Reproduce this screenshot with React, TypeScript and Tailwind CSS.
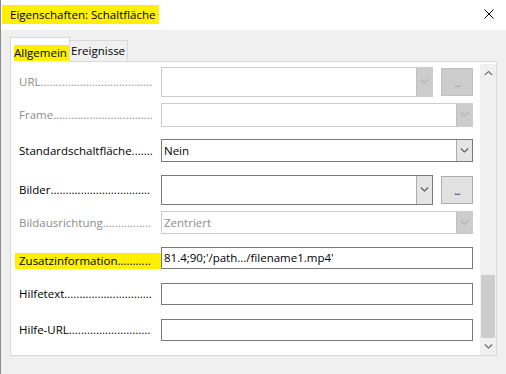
import { ReactNode } from 'react'

const font = { fontFamily: '"Open Sans", "Noto Sans", sans-serif' }

// fill a label with dots up to the given width, like the original dialog
let ctx: CanvasRenderingContext2D | null = null
function dotted(text: string, width = 134) {
  if (!ctx) ctx = document.createElement('canvas').getContext('2d')
  if (!ctx) return text + '.'.repeat(20)
  ctx.font = '11.5px "Open Sans", "Noto Sans", sans-serif'
  let s = text
  while (ctx.measureText(s + '.').width <= width) s += '.'
  return s
}

function Chevron({ up = false, color = '#606060', size = 9 }: { up?: boolean; color?: string; size?: number }) {
  return (
    <svg width={size} height={size / 2 + 1} viewBox="0 0 10 6" fill="none">
      <path
        d={up ? 'M1 5.5 L5 1.5 L9 5.5' : 'M1 0.5 L5 4.5 L9 0.5'}
        stroke={color}
        strokeWidth={1.2}
      />
    </svg>
  )
}

function Label({ text, disabled }: { text: string; disabled?: boolean }) {
  return (
    <div
      className={`w-[142px] shrink-0 whitespace-nowrap text-[11.5px] ${
        disabled ? 'text-[#8d8d8d]' : 'text-black'
      }`}
    >
      {dotted(text)}
    </div>
  )
}

function Field({
  value,
  disabled,
  dropdown,
  children,
}: {
  value?: string
  disabled?: boolean
  dropdown?: boolean
  children?: ReactNode
}) {
  return (
    <div
      className={`flex h-full flex-1 items-stretch border bg-white ${
        disabled ? 'border-[#cccccc]' : 'border-[#7a7a7a]'
      }`}
    >
      <div
        className={`flex flex-1 items-center pl-[2px] text-[11.5px] ${
          disabled ? 'text-[#8d8d8d]' : 'text-black'
        }`}
      >
        {value}
      </div>
      {dropdown && (
        <div
          className={`flex w-[16px] items-center justify-center border-l ${
            disabled ? 'border-[#bfbfbf] bg-[#cccccc]' : 'border-[#adadad] bg-[#e5e5e5]'
          }`}
        >
          <Chevron color={disabled ? '#b0b0b0' : '#505050'} />
        </div>
      )}
      {children}
    </div>
  )
}

function DotsButton({ disabled }: { disabled?: boolean }) {
  return (
    <div
      className={`ml-[8px] flex h-[28px] w-[32px] shrink-0 items-center justify-center border pt-[3px] text-[11px] tracking-[-1px] ${
        disabled
          ? 'border-[#bfbfbf] bg-[#cccccc] text-[#9a9a9a]'
          : 'border-[#adadad] bg-[#e1e1e1] text-[#202060]'
      }`}
    >
      ...
    </div>
  )
}

export default function App() {
  return (
    <div
      className="flex h-[374px] w-[506px] flex-col overflow-hidden border-l border-[#8a8a8a] bg-[#f0f0f0]"
      style={font}
    >
      {/* Title bar */}
      <div className="flex h-[30px] shrink-0 items-start justify-between bg-white">
        <div className="ml-px mt-[5px] h-[19px] bg-[#fff000] pl-[8px] pr-[4px] text-[11.5px] leading-[19px] text-black">
          Eigenschaften: Schaltfläche
        </div>
        <svg className="mr-[12px] mt-[9px]" width="10" height="10" viewBox="0 0 10 10">
          <path d="M0.5 0.5 L9.5 9.5 M9.5 0.5 L0.5 9.5" stroke="#000" strokeWidth={1} />
        </svg>
      </div>

      {/* Tabs */}
      <div className="ml-[9px] mt-[7px] flex h-[24px] items-end">
        <div className="relative z-10 -mb-px flex h-[25px] w-[60px] items-end border border-b-0 border-[#d9d9d9] bg-white">
          <div className="mb-px ml-[3px] h-[16px] w-[57px] bg-[#fff000] text-[11.5px] leading-[16px] text-black">
            Allgemein
          </div>
        </div>
        <div className="flex h-[21px] w-[58px] items-center border border-l-0 border-b-0 border-[#d9d9d9] bg-[#f0f0f0] pl-[1px] text-[11.5px] text-black">
          Ereignisse
        </div>
      </div>

      {/* Panel */}
      <div className="ml-[9px] flex h-[295px] w-[487px] border border-[#d9d9d9] bg-white">
        <div className="flex flex-1 flex-col pl-[8px] pr-[7px]">
          <div className="mt-[5px] flex h-[30px] items-center">
            <Label text="URL" disabled />
            <Field disabled dropdown />
            <DotsButton disabled />
          </div>
          <div className="mt-[6px] flex h-[24px] items-center">
            <Label text="Frame" disabled />
            <Field disabled dropdown />
          </div>
          <div className="mt-[12px] flex h-[23px] items-center">
            <Label text="Standardschaltfläche" />
            <Field value="Nein" dropdown />
          </div>
          <div className="mt-[13px] flex h-[30px] items-center">
            <Label text="Bilder" />
            <Field dropdown />
            <DotsButton />
          </div>
          <div className="mt-[6px] flex h-[23px] items-center">
            <Label text="Bildausrichtung" disabled />
            <Field value="Zentriert" disabled dropdown />
          </div>
          <div className="mt-[13px] flex h-[22px] items-start">
            <div className="-ml-[4px] mt-[6px] h-[16px] w-[146px] shrink-0 whitespace-nowrap bg-[#fff000] pl-[4px] text-[11.5px] leading-[16px] text-black">
              {dotted('Zusatzinformation')}
            </div>
            <Field value="81.4;90;'/path.../filename1.mp4'" />
          </div>
          <div className="mt-[14px] flex h-[22px] items-center">
            <Label text="Hilfetext" />
            <Field />
          </div>
          <div className="mt-[14px] flex h-[22px] items-center">
            <Label text="Hilfe-URL" />
            <Field />
          </div>
        </div>

        {/* Scrollbar */}
        <div className="mt-[2px] flex w-[16px] flex-col bg-[#f0f0f0]">
          <div className="flex h-[17px] items-center justify-center">
            <Chevron up color="#606060" />
          </div>
          <div className="flex-1" />
          <div className="mx-px h-[63px] bg-[#cdcdcd]" />
          <div className="flex h-[17px] items-center justify-center">
            <Chevron color="#606060" />
          </div>
        </div>
      </div>
    </div>
  )
}
